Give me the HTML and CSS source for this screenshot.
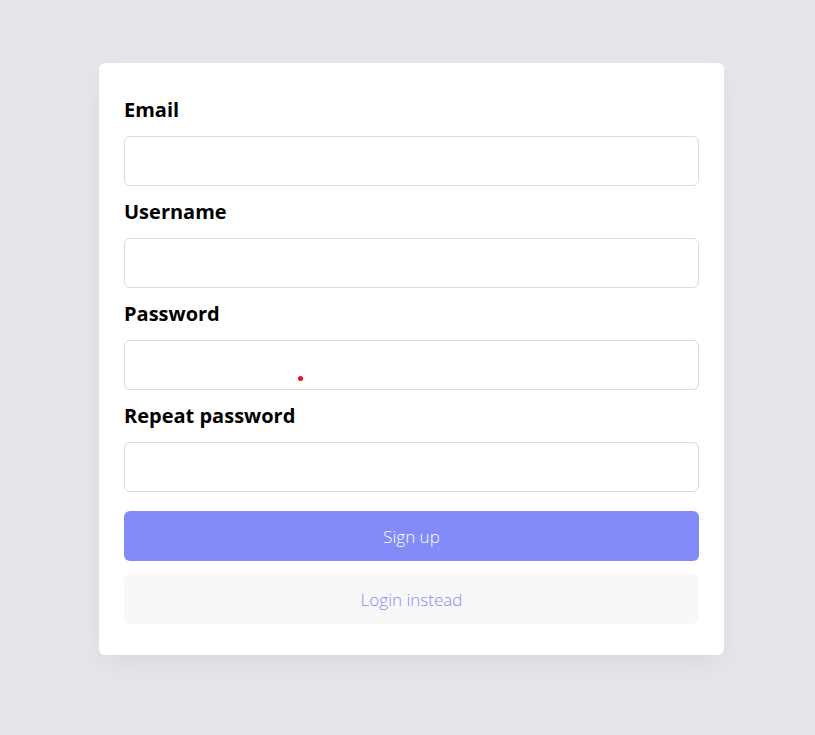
FILE: index.html
```html
<!DOCTYPE html>
<html lang="en">
<head>
<meta charset="utf-8">
<title>Sign up</title>
<link rel="stylesheet" href="styles.css">
</head>
<body>
<main class="page">
  <form class="card">
    <div class="field">
      <label class="label" for="email">Email</label>
      <input class="input" id="email" type="text">
    </div>
    <div class="field">
      <label class="label" for="username">Username</label>
      <input class="input" id="username" type="text">
    </div>
    <div class="field">
      <label class="label" for="password">Password</label>
      <div class="input-wrap">
        <input class="input" id="password" type="password">
        <span class="dot"></span>
      </div>
    </div>
    <div class="field">
      <label class="label" for="repeat">Repeat password</label>
      <input class="input" id="repeat" type="password">
    </div>
    <button class="btn btn-primary" type="button">Sign up</button>
    <button class="btn btn-secondary" type="button">Login instead</button>
  </form>
</main>
</body>
</html>
```

FILE: styles.css
```css
* { box-sizing: border-box; }
html, body {
  margin: 0;
  padding: 0;
  background: #e5e7eb;
  font-family: "Open Sans", "Liberation Sans", sans-serif;
}
.page {
  padding: 63px 0 0 99px;
  min-height: 735px;
}
.card {
  width: 625px;
  background: #ffffff;
  border-radius: 6px;
  padding: 33px 25px 31px;
  box-shadow: 0 10px 30px rgba(0, 0, 0, 0.06);
  display: flex;
  flex-direction: column;
}
.field {
  display: flex;
  flex-direction: column;
  margin-bottom: 12px;
}
.label {
  font-size: 20px;
  font-weight: 700;
  line-height: 28px;
  color: #000;
  margin-bottom: 12px;
}
.input-wrap { position: relative; }
.input {
  display: block;
  width: 100%;
  height: 50px;
  border: 1px solid #dadada;
  border-radius: 6px;
  background: #fff;
  font: inherit;
  outline: none;
}
.dot {
  position: absolute;
  left: 174px;
  top: 36px;
  width: 5px;
  height: 5px;
  border-radius: 50%;
  background: #e8101a;
}
.btn {
  display: block;
  width: 100%;
  height: 50px;
  border: none;
  border-radius: 6px;
  font-family: "Open Sans", "Liberation Sans", sans-serif;
  font-size: 17px;
  font-weight: 300;
  cursor: pointer;
}
.btn-primary {
  margin-top: 7px;
  background: #818cf8;
  color: #ffffff;
}
.btn-secondary {
  margin-top: 13px;
  background: #f8f8f8;
  color: #818cf8;
}
```
